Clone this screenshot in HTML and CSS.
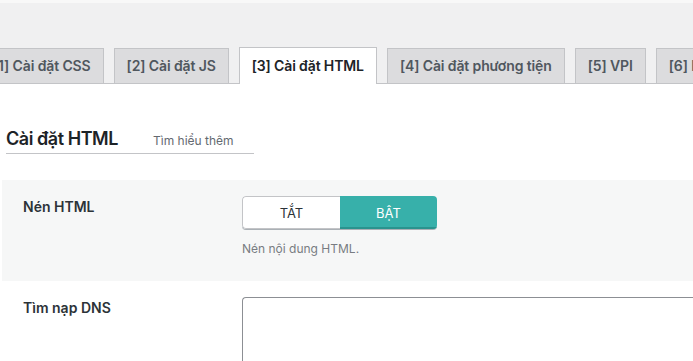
FILE: index.html
```html
<!DOCTYPE html>
<html lang="vi">
<head>
<meta charset="utf-8">
<link rel="stylesheet" href="styles.css">
</head>
<body>
<div class="topstrip"></div>
<div class="header">
  <nav class="tabs">
    <a class="tab">[1] Cài đặt CSS</a>
    <a class="tab">[2] Cài đặt JS</a>
    <a class="tab active">[3] Cài đặt HTML</a>
    <a class="tab">[4] Cài đặt phương tiện</a>
    <a class="tab">[5] VPI</a>
    <a class="tab">[6] Phân tích</a>
  </nav>
</div>
<main class="content">
  <div class="title-row">
    <h2 class="title">Cài đặt HTML</h2>
    <a class="learn">Tìm hiểu thêm</a>
  </div>
  <section class="row shaded">
    <div class="label">Nén HTML</div>
    <div class="field">
      <div class="toggle">
        <span class="opt off">TẮT</span>
        <span class="opt on">BẬT</span>
      </div>
      <p class="desc">Nén nội dung HTML.</p>
    </div>
  </section>
  <section class="row">
    <div class="label">Tìm nạp DNS</div>
    <div class="field">
      <div class="textarea"></div>
    </div>
  </section>
</main>
</body>
</html>
```
FILE: styles.css
```css
html, body {
  margin: 0;
  padding: 0;
  background: #ffffff;
  font-family: Inter, "Noto Sans", "Liberation Sans", sans-serif;
  overflow: hidden;
}

.topstrip {
  height: 3px;
  background: #f8f8f8;
}

.header {
  background: #f0f0f1;
  padding-top: 45px;
  border-bottom: 1px solid #c3c4c7;
  height: 35px;
}

.tabs {
  display: flex;
  gap: 10px;
  margin-left: -20px;
  white-space: nowrap;
}

.tab {
  display: block;
  flex: none;
  height: 34px;
  line-height: 34px;
  padding: 0 12px;
  font-size: 14px;
  font-weight: 600;
  letter-spacing: -0.12px;
  color: #50575e;
  background: #dcdcde;
  border: 1px solid #c3c4c7;
  border-bottom: none;
}

.tab.active {
  background: #ffffff;
  color: #1d2327;
  height: 36px;
  margin-top: -1px;
  line-height: 36px;
  border-color: #c3c4c7;
}

.content {
  padding-top: 42px;
}

.title-row {
  display: flex;
  align-items: baseline;
  width: 248px;
  margin-left: 6px;
  padding-bottom: 1px;
  border-bottom: 1px solid #c3c4c7;
}

.title {
  margin: 0;
  font-size: 18px;
  font-weight: 600;
  letter-spacing: -0.45px;
  color: #1d2327;
  line-height: 26px;
}

.learn {
  margin-left: 35px;
  font-size: 12px;
  color: #646970;
}

.row {
  display: flex;
  margin-left: 2px;
  padding: 16px 0 0 21px;
}

.shaded {
  margin-top: 26px;
  background: #f6f7f7;
  height: 85px;
}

.label {
  width: 219px;
  flex: none;
  font-size: 14px;
  font-weight: 600;
  color: #2c3338;
  line-height: 22px;
}

.field {
  flex: 1;
}

.toggle {
  display: flex;
  width: 195px;
  height: 33px;
  border-radius: 4px;
  overflow: hidden;
  box-shadow: 0 1px 0 #aab0b5;
}

.opt {
  flex: 1;
  display: flex;
  align-items: center;
  justify-content: center;
  font-size: 13px;
}

.opt.off {
  background: #ffffff;
  color: #2c3338;
  border: 1px solid #c3c4c7;
  border-right: none;
  border-radius: 4px 0 0 4px;
}

.opt.on {
  background: #37b0aa;
  color: #ffffff;
  box-shadow: inset 0 -2px 0 #2a938e;
}

.desc {
  margin: 12px 0 0;
  font-size: 12px;
  color: #787c82;
}

.textarea {
  height: 80px;
  border: 1px solid #8c8f94;
  border-right: none;
  border-radius: 4px 0 0 4px;
}
```
